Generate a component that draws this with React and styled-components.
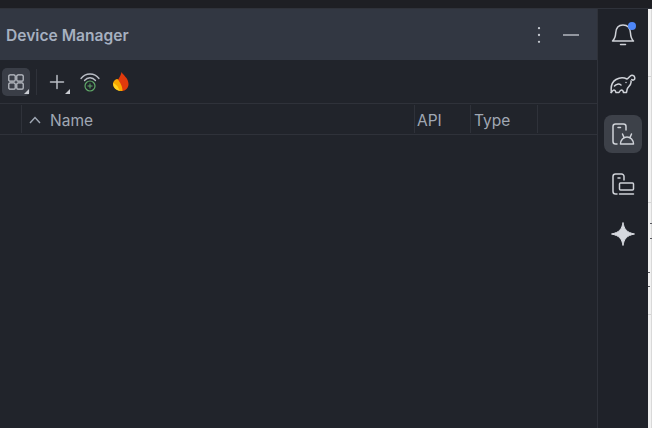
import styled, { createGlobalStyle } from 'styled-components';

const Global = createGlobalStyle`
  html, body { margin: 0; padding: 0; background: #1e1f22; }
  body { width: 652px; height: 428px; overflow: hidden; font-family: "Inter", "Liberation Sans", sans-serif; }
`;

const Shell = styled.div`
  display: flex;
  flex-direction: column;
  width: 652px;
  height: 428px;
  background: #1e1f24;
`;

const TopEdge = styled.div`
  height: 8px;
  flex: none;
  background: #1e1f24;
  border-bottom: 1px solid #2f323a;
`;

const Body = styled.div`
  flex: 1;
  display: flex;
  min-height: 0;
`;

const Panel = styled.div`
  flex: 1;
  display: flex;
  flex-direction: column;
  background: #21242b;
`;

const Header = styled.div`
  height: 51px;
  flex: none;
  display: flex;
  align-items: center;
  justify-content: space-between;
  padding: 0 17px 0 6px;
  background: #323742;
`;

const Title = styled.div`
  color: #a6b0c0;
  font-size: 15.6px;
  font-weight: 600;
  padding-top: 2px;
`;

const HeaderActions = styled.div`
  display: flex;
  align-items: center;
  gap: 15px;
`;

const Toolbar = styled.div`
  height: 43px;
  flex: none;
  display: flex;
  align-items: center;
  padding: 0 2px;
  border-bottom: 1px solid #2f323a;
`;

const ToolButton = styled.div`
  position: relative;
  width: ${p => p.$w || 28}px;
  height: 28px;
  display: flex;
  align-items: center;
  justify-content: center;
  border-radius: 5px;
  background: ${p => (p.$active ? '#3a3e47' : 'transparent')};
`;

const Corner = styled.span`
  position: absolute;
  right: 1px;
  bottom: 2px;
  width: 0;
  height: 0;
  border-left: 5px solid transparent;
  border-bottom: 5px solid #c9ccd2;
`;

const Divider = styled.div`
  width: 1px;
  height: 26px;
  margin: 0 6px;
  background: #2f323a;
`;

const TableHead = styled.div`
  height: 30px;
  flex: none;
  display: flex;
  border-bottom: 1px solid #2f323a;
`;

const Column = styled.div`
  width: ${p => p.$w}px;
  flex: none;
  display: flex;
  align-items: center;
  gap: 9px;
  padding-left: ${p => p.$pad || 0}px;
  padding-top: 2px;
  box-sizing: border-box;
  color: #a0a8b4;
  font-size: 15.5px;
  border-right: ${p => (p.$noLine ? 'none' : '1px solid #2f323a')};
  margin: 1px 0;
`;

const Rail = styled.div`
  width: 51px;
  flex: none;
  display: flex;
  flex-direction: column;
  align-items: center;
  gap: 12px;
  padding-top: 6px;
  box-sizing: border-box;
  background: #1f2229;
  border-left: 1px solid #2f323a;
`;

const RailButton = styled.div`
  width: 38px;
  height: 38px;
  display: flex;
  align-items: center;
  justify-content: center;
  border-radius: 8px;
  background: ${p => (p.$active ? '#3d4149' : 'transparent')};
`;

const Strip = styled.div`
  position: relative;
  width: 4px;
  flex: none;
  display: flex;
  flex-direction: column;
  background: #f1f1f1;
  border-right: 1px solid #d9d9d9;
  box-sizing: border-box;
`;

const StripBand = styled.div`
  height: ${p => p.$h}px;
  flex: none;
  border-bottom: 1px solid #d4d4d4;
`;

const Tick = styled.span`
  position: absolute;
  top: ${p => p.$top}px;
  left: ${p => p.$left}px;
  width: 2px;
  height: 1px;
  background: #55565c;
`;

const stroke = { fill: 'none', stroke: '#cfd2d8', strokeWidth: 1.5, strokeLinecap: 'round', strokeLinejoin: 'round' };

const GridIcon = () => (
  <svg width="16" height="16" viewBox="0 0 16 16" {...stroke} stroke="#c2c6cd" strokeWidth="1.2">
    <rect x=".8" y=".8" width="6.400" height="6.400" rx="1.300" />
    <rect x="8.800" y=".8" width="6.400" height="6.400" rx="1.300" />
    <rect x=".8" y="8.800" width="6.400" height="6.400" rx="1.300" />
    <rect x="8.800" y="8.800" width="6.400" height="6.400" rx="1.300" />
  </svg>
);

const PlusIcon = () => (
  <svg width="16" height="16" viewBox="0 0 16 16" {...stroke} stroke="#b9bdc5">
    <path d="M8 1.500v13M1.500 8h13" />
  </svg>
);

const WifiIcon = () => (
  <svg width="20" height="20" viewBox="0 0 20 20" fill="none">
    <path d="M1 6.500C5.500 .5 14.500 .5 19 6.500M4.500 8.500C7.500 4.800 12.500 4.800 15.500 8.500" stroke="#b9bdc5" strokeWidth="1.300" strokeLinecap="round" />
    <circle cx="10" cy="14" r="5" stroke="#5fa868" strokeWidth="1.200" />
    <path d="M10 11.500v5M7.500 14h5" stroke="#5fa868" strokeWidth="1" />
  </svg>
);

const FlameIcon = () => (
  <svg width="18" height="21" viewBox="0 0 18 20">
    <path d="M9.500 0.500C11 3.500 16.500 6.500 16.500 12.500C16.500 16.500 13.500 19.500 10 19.500C6.500 19.500 4.500 16.500 4.500 13C4.500 9 8.500 6 9.500 0.500Z" fill="#e03a0c" />
    <path d="M1 12.500C1 9.800 3.500 7.500 5.500 7.500C7.500 10 10.500 14 10.500 19.500C5.500 19.500 1 17 1 12.500Z" fill="#f7a600" />
    <path d="M1.200 11.500C3 12.500 5.500 14 6.400 16.500C7 18 7.500 19 8.500 19.400C4.500 19.400 1 16 1.200 11.500Z" fill="#ffd21f" />
  </svg>
);

const Dots = () => (
  <svg width="16" height="16" viewBox="0 0 16 16" fill="#c4c8cf">
    <circle cx="8" cy="1.200" r="1.150" />
    <circle cx="8" cy="8" r="1.150" />
    <circle cx="8" cy="14.800" r="1.150" />
  </svg>
);

const Minimize = () => (
  <svg width="18" height="16" viewBox="0 0 18 16" fill="none">
    <path d="M1 8h16" stroke="#b4b8c0" strokeWidth="1.500" />
  </svg>
);

const Chevron = () => (
  <svg width="12" height="8" viewBox="0 0 12 8" fill="none">
    <path d="M1 7l5-5.500L11 7" stroke="#a0a8b4" strokeWidth="1.400" />
  </svg>
);

const Bell = () => (
  <svg width="26" height="26" viewBox="0 0 26 26" fill="none">
    <path d="M2.500 20c2.200-2 3-4 3.200-8 .3-5 3-8 7.300-8 4.500 0 7.200 3 7.500 8 .2 4 .8 6 3 8Z" {...stroke} />
    <path d="M10.500 23.500h5" {...stroke} />
    <circle cx="22" cy="5" r="4" fill="#4e87f8" />
  </svg>
);

const Elephant = () => (
  <svg width="26" height="20" viewBox="0 0 26 20" {...stroke}>
    <path d="M1.500 18.500C.5 13 2 8 6 5.500 9.500 3.500 14 3.500 17 5c1.500-.5 2-2 3.500-3.200C22 .8 24.500 1.500 24.800 3.800c.2 2-1.800 3-3 1.700" />
    <path d="M21 7c.8 3-1.500 5-3 6.500-1 1.200-1.200 3-1.500 5h-3c-.3-1.500-1-2.500-2-2.500s-1.700 1-2.500 2.500h-3c-.5-2-1-2.500-2-2.500-.8 0-1.500 1-3 2.500" />
    <path d="M4.500 12c1.500-2 4.500-2.500 6.500-1" />
    <path d="M16 8.500h.01" />
  </svg>
);

const PhoneAndroid = () => (
  <svg width="24" height="24" viewBox="0 0 24 24" {...stroke}>
    <path d="M6 22H4.500A2.500 2.500 0 0 1 2 19.500V4.500A2.500 2.500 0 0 1 4.500 2h8A2.500 2.500 0 0 1 15 4.500V8" />
    <path d="M7 5.500h2.500" />
    <path d="M9.500 22c0-4 3-7 6.500-7s6.500 3 6.500 7Z" />
    <path d="M11.500 12l1.500 3.500M20.500 12L19 15.500" />
  </svg>
);

const PhoneDesktop = () => (
  <svg width="24" height="24" viewBox="0 0 24 24" {...stroke}>
    <path d="M6 22H4.500A2.500 2.500 0 0 1 2 19.500V4.500A2.500 2.500 0 0 1 4.500 2h6A2.500 2.500 0 0 1 13 4.500V8" />
    <path d="M7 6h2" />
    <rect x="8.500" y="11" width="14" height="7" rx="1" />
    <path d="M8.500 22h14" />
  </svg>
);

const Sparkle = () => (
  <svg width="24" height="24" viewBox="0 0 24 24">
    <path d="M12 .5c1.200 6.800 3.500 9.800 11.500 11.500-8 1.700-10.300 4.700-11.500 11.500C10.800 16.700 8.500 13.700.5 12 8.500 10.300 10.800 7.300 12 .5Z" fill="#d5d8de" stroke="#d5d8de" strokeWidth="1" strokeLinejoin="round" />
  </svg>
);

export default function App() {
  return (
    <Shell>
      <Global />
      <TopEdge />
      <Body>
        <Panel>
          <Header>
            <Title>Device Manager</Title>
            <HeaderActions>
              <Dots />
              <Minimize />
            </HeaderActions>
          </Header>
          <Toolbar>
            <ToolButton $active>
              <GridIcon />
              <Corner />
            </ToolButton>
            <Divider />
            <ToolButton>
              <PlusIcon />
              <Corner />
            </ToolButton>
            <ToolButton $w={38}>
              <WifiIcon />
            </ToolButton>
            <ToolButton $w={24}>
              <FlameIcon />
            </ToolButton>
          </Toolbar>
          <TableHead>
            <Column $w={22} />
            <Column $w={393} $pad={7}>
              <Chevron />
              Name
            </Column>
            <Column $w={56} $pad={2}>API</Column>
            <Column $w={67} $pad={3}>Type</Column>
            <Column $w={59} $noLine />
          </TableHead>
        </Panel>
        <Rail>
          <RailButton><Bell /></RailButton>
          <RailButton><Elephant /></RailButton>
          <RailButton $active><PhoneAndroid /></RailButton>
          <RailButton><PhoneDesktop /></RailButton>
          <RailButton><Sparkle /></RailButton>
        </Rail>
        <Strip>
          <StripBand $h={67} />
          <StripBand $h={125} />
          <StripBand $h={111} />
          <Tick $top={214} $left={2} />
          <Tick $top={229} $left={2} />
          <Tick $top={263} $left={0} />
          <Tick $top={277} $left={0} />
        </Strip>
      </Body>
    </Shell>
  );
}
